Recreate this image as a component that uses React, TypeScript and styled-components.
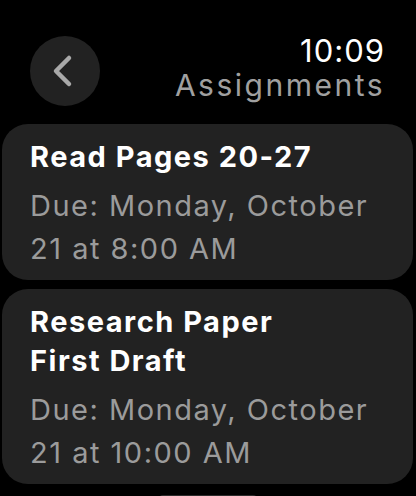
import styled, { createGlobalStyle } from 'styled-components';

const Global = createGlobalStyle`
    html, body {
        margin: 0;
        padding: 0;
        background: #000;
    }
    body {
        font-family: Inter, 'Noto Sans', 'Liberation Sans', sans-serif;
        -webkit-font-smoothing: antialiased;
    }
`;

const Screen = styled.div`
    width: 416px;
    height: 496px;
    overflow: hidden;
    background: #000;
    display: flex;
    flex-direction: column;
`;

const Header = styled.header`
    display: flex;
    justify-content: space-between;
    align-items: flex-start;
    padding: 34px 31px 0 30px;
    height: 89px;
    box-sizing: border-box;
`;

const BackButton = styled.button`
    width: 70px;
    height: 70px;
    margin-top: 2px;
    border: none;
    border-radius: 50%;
    background: #222;
    padding: 0;
    display: flex;
    align-items: center;
    justify-content: center;
    cursor: pointer;
`;

const Titles = styled.div`
    display: flex;
    flex-direction: column;
    align-items: flex-end;
`;

const Time = styled.span`
    color: #fff;
    font-size: 31px;
    line-height: 34px;
    font-weight: 400;
    letter-spacing: 1px;
`;

const Heading = styled.h1`
    margin: 1px 0 0;
    color: #a0a0a0;
    font-size: 30px;
    line-height: 32px;
    font-weight: 400;
    letter-spacing: 2.5px;
`;

const List = styled.div`
    display: flex;
    flex-direction: column;
    gap: 9px;
    padding: 35px 3px 0 2px;
`;

const Card = styled.div`
    background: #222;
    border-radius: 26px;
    padding: 13px 30px 10px 28px;
`;

const CardTitle = styled.div`
    color: #fff;
    font-size: 29px;
    line-height: 39px;
    font-weight: 700;
    letter-spacing: 1.5px;
`;

const Due = styled.div`
    margin-top: 8px;
    color: #9b9b9b;
    font-size: 29px;
    line-height: 43px;
    font-weight: 400;
    letter-spacing: 1.5px;
`;

const MoreBar = styled.div`
    align-self: center;
    width: 100px;
    height: 10px;
    margin-top: 2px;
    border-radius: 6px;
    background: #2c2c2c;
`;

const assignments = [
    { title: ['Read Pages 20-27'], due: 'Due: Monday, October 21 at 8:00 AM' },
    { title: ['Research Paper', 'First Draft'], due: 'Due: Monday, October 21 at 10:00 AM' },
];

const ChevronLeft = () => (
    <svg width="70" height="70" viewBox="0 0 70 70">
        <polyline
            points="39,22 26,35 39,48"
            fill="none"
            stroke="#a9a9a9"
            strokeWidth="4.5"
            strokeLinecap="round"
            strokeLinejoin="round"
        />
    </svg>
);

export default function App() {
    return (
        <Screen>
            <Global />
            <Header>
                <BackButton aria-label="Back">
                    <ChevronLeft />
                </BackButton>
                <Titles>
                    <Time>10:09</Time>
                    <Heading>Assignments</Heading>
                </Titles>
            </Header>
            <List>
                {assignments.map((a) => (
                    <Card key={a.due}>
                        <CardTitle>
                            {a.title.map((line) => (
                                <div key={line}>{line}</div>
                            ))}
                        </CardTitle>
                        <Due>{a.due}</Due>
                    </Card>
                ))}
                <MoreBar />
            </List>
        </Screen>
    );
}
